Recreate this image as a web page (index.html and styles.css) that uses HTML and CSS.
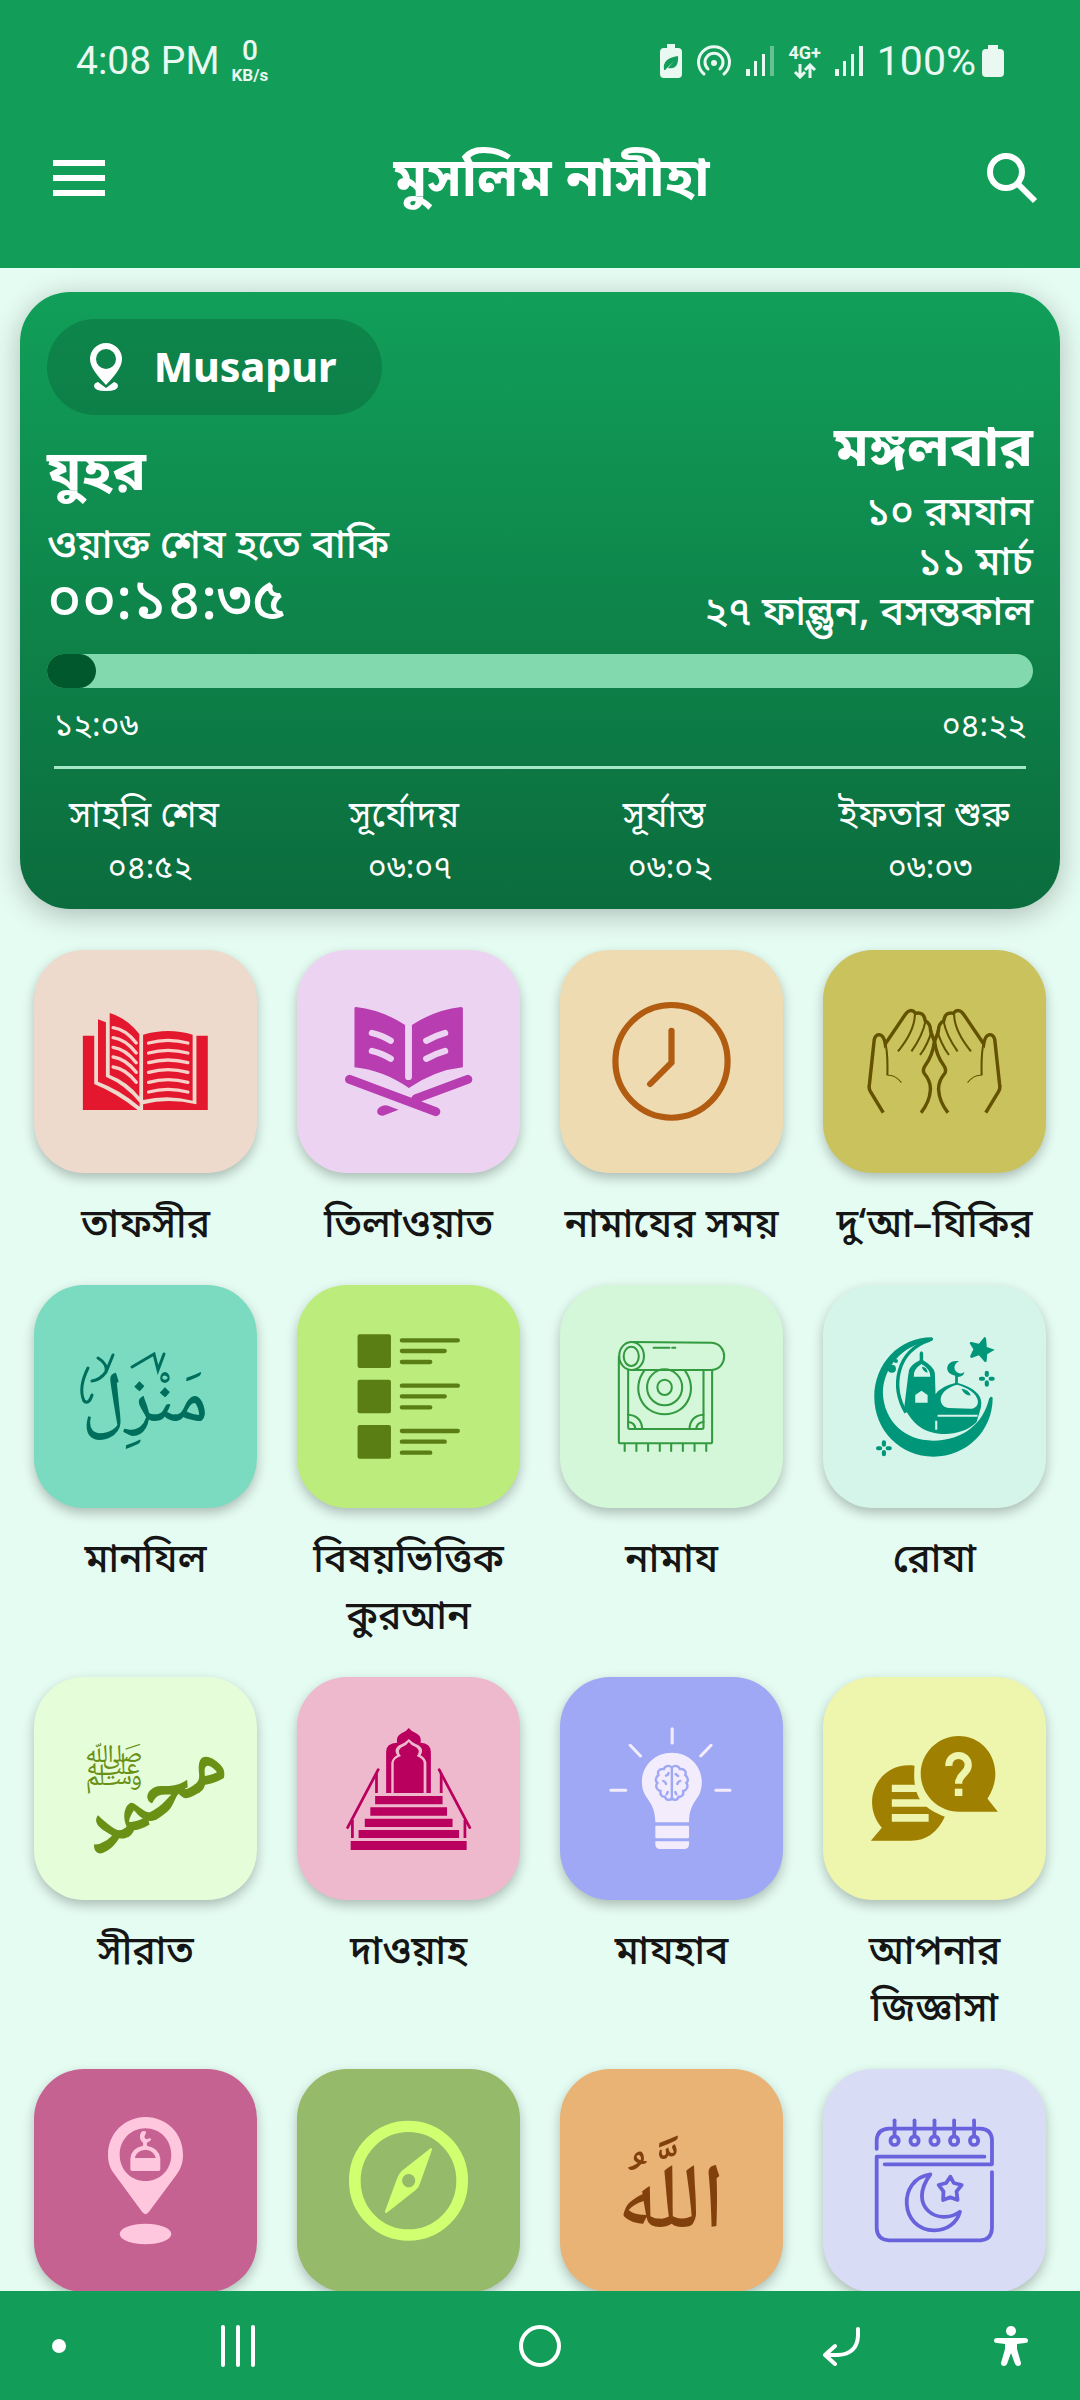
FILE: index.html
```html
<!DOCTYPE html>
<html lang="bn">
<head>
    <meta charset="UTF-8">
    <meta name="viewport" content="width=device-width, initial-scale=1">
    <title>মুসলিম নাসীহা</title>
    <link rel="stylesheet" href="styles.css">
</head>
<body>
<div class="app">
    <header class="header">
        <div class="status">
            <div class="status_left">
                <span>4:08 PM</span>
                <span class="speed"><b>0</b><small>KB/s</small></span>
            </div>
            <div class="status_right">
                <svg width="22" height="34" viewBox="0 0 22 34"><path fill="#e9f8f0" d="M7 0h8v4h3q4 0 4 4v22q0 4-4 4H4q-4 0-4-4V8q0-4 4-4h3z"/><path fill="#129d59" d="M4 26Q2 14 18 12q1 14-10 12l6-7-9 9z"/></svg>
                <svg width="36" height="32" viewBox="0 0 36 32" fill="none" stroke="#e9f8f0" stroke-width="3" stroke-linecap="round"><path d="M8 29a15.500 15.500 0 1 1 20 0M12 24a9 9 0 1 1 12 0"/><circle cx="18" cy="18" r="3" fill="#e9f8f0" stroke="none"/></svg>
                <svg width="28" height="30" viewBox="0 0 28 30" fill="#e9f8f0"><path d="M0 23h4v7H0zM8 15h3v15H8zM16 8h3v22h-3z"/><path opacity=".4" d="M24 0h4v30h-4z"/></svg>
                <span class="network"><b>4G+</b><svg width="26" height="16" viewBox="0 0 26 16" fill="none" stroke="#e9f8f0" stroke-width="3"><path d="M8 1v12M3 9l5 5 5-5M18 15V3M13 7l5-5 5 5"/></svg></span>
                <svg width="28" height="30" viewBox="0 0 28 30" fill="#e9f8f0"><path d="M0 23h4v7H0zM8 15h3v15H8zM16 8h3v22h-3zM24 0h4v30h-4z"/></svg>
                <span class="battery">100%<svg width="22" height="32" viewBox="0 0 22 32"><path fill="#e9f8f0" d="M6 0h10v4h2q4 0 4 4v20q0 4-4 4H4q-4 0-4-4V8q0-4 4-4h2z"/></svg></span>
            </div>
        </div>
        <div class="toolbar">
            <button class="tool" type="button" aria-label="মেনু"><svg width="52" height="36" viewBox="0 0 52 36" fill="#fff"><path d="M0 0h52v6H0zM0 15h52v6H0zM0 30h52v6H0z"/></svg></button>
            <h1>মুসলিম নাসীহা</h1>
            <button class="tool" type="button" aria-label="খুঁজুন"><svg width="52" height="52" viewBox="0 0 52 52" fill="none" stroke="#fff" stroke-width="6"><circle cx="20" cy="20" r="16"/><path d="M31 31l18 18"/></svg></button>
        </div>
    </header>

    <main class="content">
        <section class="card">
            <div class="summary">
                <div class="now">
                    <button class="place" type="button">
                        <svg width="32" height="48" viewBox="0 0 32 48"><path fill="#fff" fill-rule="evenodd" d="M16 0a16 16 0 0 1 16 16c0 9-8 17-16 26C8 33 0 25 0 16A16 16 0 0 1 16 0zm0 6a10 10 0 1 0 0 20 10 10 0 0 0 0-20z"/><path fill="#fff" d="M8 39l8 6 8-6q4 1 4 4 0 5-12 5T4 43q0-3 4-4z"/></svg>
                        <span>Musapur</span>
                    </button>
                    <h2>যুহর</h2>
                    <p>ওয়াক্ত শেষ হতে বাকি</p>
                    <p class="countdown">০০:১৪:৩৫</p>
                </div>
                <div class="date">
                    <h2>মঙ্গলবার</h2>
                    <p>১০ রমযান</p>
                    <p>১১ মার্চ</p>
                    <p>২৭ ফাল্গুন, বসন্তকাল</p>
                </div>
            </div>
            <div class="bar"><div class="bar_fill" style="width: 5%"></div></div>
            <div class="range"><span>১২:০৬</span><span>০৪:২২</span></div>
            <dl class="times">
                <div><dt>সাহরি শেষ</dt><dd>০৪:৫২</dd></div>
                <div><dt>সূর্যোদয়</dt><dd>০৬:০৭</dd></div>
                <div><dt>সূর্যাস্ত</dt><dd>০৬:০২</dd></div>
                <div><dt>ইফতার শুরু</dt><dd>০৬:০৩</dd></div>
            </dl>
        </section>

        <nav class="grid">
            <a class="item" href="#">
                <span class="tile tafsir">
                    <svg viewBox="99 60 648 669" preserveAspectRatio="none">
                        <g fill="#e3182f">
                            <path d="M241 317h33v145q66 28 126 78H241z"/>
                            <path d="M285 268l23 9v163q57 25 98 78v12q-56-50-121-75z"/>
                            <path d="M319 249q51 16 86 63v188q-35-45-86-65z"/>
                            <path d="M416 314q74-22 144 0v198q-70-20-144-2z"/>
                            <path d="M571 317h33v223H416v-17q74-20 155 0z"/>
                        </g>
                        <g fill="none" stroke="#f9cfc8" stroke-width="10" stroke-linecap="round">
                            <path d="M329 293q36 5 67 46M329 323q36 5 67 46M329 352q36 5 67 46M329 381q36 5 67 46M329 411q36 5 67 46"/>
                            <path d="M432 339q56-16 114 0M432 369q56-16 114 0M432 398q56-16 114 0M432 427q56-16 114 0M432 457q56-16 114 0M432 486q56-16 114 0"/>
                        </g>
                    </svg>
                </span>
                তাফসীর
            </a>
            <a class="item" href="#">
                <span class="tile tilawat">
                    <svg viewBox="862 60 648 669" preserveAspectRatio="none">
                        <path fill="#b73db1" d="M1033 231q77 9 143 54v155a10 10 0 0 0 20 0V285q66-45 143-54 5 0 5 5v176q-79 8-157 62-77-54-158-62V235q0-4 4-4z"/>
                        <path fill="none" stroke="#edd3f2" stroke-width="19" stroke-linecap="round" d="M1080 309q30 7 54 23M1080 363q30 7 54 23M1292 309q-28 8-54 23M1292 363q-28 8-54 23"/>
                        <path fill="none" stroke="#b73db1" stroke-width="27" stroke-linecap="round" d="M1015 448l250 97M1358 448l-150 58"/>
                        <path fill="#b73db1" d="M1102 532q16-12 32-2l23 9-45 18q-17 1-17-13 0-8 7-12z"/>
                    </svg>
                </span>
                তিলাওয়াত
            </a>
            <a class="item" href="#">
                <span class="tile times_tile">
                    <svg viewBox="58 60 648 669" preserveAspectRatio="none" fill="none" stroke="#b15c10" stroke-width="18" stroke-linecap="round" stroke-linejoin="round">
                        <ellipse cx="382" cy="394" rx="163" ry="169"/>
                        <path d="M382 302v96l-62 64"/>
                    </svg>
                </span>
                নামাযের সময়
            </a>
            <a class="item" href="#">
                <span class="tile dua">
                    <svg viewBox="822 60 648 669" preserveAspectRatio="none" fill="none" stroke="#635200">
                        <g id="hand">
                            <path stroke-width="10" d="M997 548l-37-63q-6-10-3-23l14-134q4-14 15-14 13 2 17 28l57-87q16-24 31-5 24-6 28 22 16 8 16 33l11 29q-6 44-26 71-10 13-4 25 20 25 18 50-2 35-27 68"/>
                            <path stroke-width="6" d="M1002 335q9 30 7 101M1089 252q0 50-49 112M1120 272q-8 45-41 92M1138 300q-9 40-34 75"/>
                            <path stroke-width="3" d="M1009 436q22-3 41 22"/>
                        </g>
                        <use href="#hand" transform="translate(2292 0) scale(-1 1)"/>
                    </svg>
                </span>
                দু‘আ–যিকির
            </a>
            <a class="item" href="#">
                <span class="tile manzil">
                    <svg viewBox="0 0 223 223" fill="#006e5c">
                        <text class="arabic" x="111" y="136" font-size="72" text-anchor="middle">مَنْزِل</text>
                        <!-- ornaments around the word -->
                        <g fill="none" stroke="#006e5c" stroke-width="3" stroke-linecap="round">
                            <path d="M64 73q10 6 8 14l7-17M72 87q-6 8-14 9M54 83q-10 20-4 33 5 4 8-6M98 82l22-13 4 16 6-16"/>
                        </g>
                    </svg>
                </span>
                মানযিল
            </a>
            <a class="item" href="#">
                <span class="tile topics">
                    <svg viewBox="862 75 648 669" preserveAspectRatio="none">
                        <g id="topic">
                            <rect x="1038" y="223" width="97" height="101" rx="6" fill="#5a7d14"/>
                            <path stroke="#5a7d14" stroke-width="13" stroke-linecap="round" d="M1167 241h162M1167 273h124M1167 306h82"/>
                        </g>
                        <use href="#topic" y="136"/>
                        <use href="#topic" y="272"/>
                    </svg>
                </span>
                বিষয়ভিত্তিক কুরআন
            </a>
            <a class="item" href="#">
                <span class="tile namaz">
                    <svg viewBox="58 75 648 669" preserveAspectRatio="none" fill="none" stroke="#349a40" stroke-width="6" stroke-linecap="round">
                        <ellipse cx="266" cy="288" rx="36" ry="42"/>
                        <ellipse cx="265" cy="289" rx="22" ry="29"/>
                        <path d="M266 246l233 2c48 4 48 78 0 82H266M330 263h46M384 263h9"/>
                        <path d="M229 290v256q0 4 5 4h261q5 0 5-5V330M256 330v172q0 5 5 5h209q5 0 5-5V330"/>
                        <ellipse cx="362" cy="382" rx="21" ry="23"/>
                        <ellipse cx="362" cy="382" rx="51" ry="54"/>
                        <path d="M303 332c-40 54-8 131 59 131s99-77 59-131"/>
                        <path d="M256 464q38 2 41 43M256 486q20 2 21 21M475 464q-38 2-41 43M475 486q-20 2-21 21"/>
                        <path d="M246 552v21M280 552v21M314 552v21M348 552v21M381 552v21M415 552v21M449 552v21M483 552v21"/>
                    </svg>
                </span>
                নামায
            </a>
            <a class="item" href="#">
                <span class="tile roza">
                    <svg viewBox="822 75 648 669" preserveAspectRatio="none" fill="#00967a">
                        <path d="M1138 232q8 5 0 11c-90 10-142 85-142 157 4 85 64 142 146 142 88 0 146-52 163-127 5-8 10-5 10 0 0 97-75 175-172 175s-172-80-172-179 72-179 167-179z"/>
                        <path fill="none" stroke="#00967a" stroke-width="10" d="M1133 240c-100 34-114 140-70 218"/>
                        <path d="M1069 350l3-20q5-15 31-29v-22q5-10 10 0v22q30 18 34 38l2 64q15-24 57-34v-22c-40-10-22-52 11-43-20 10-15 32 1 36q6 2 15-4-2 14-19 15v18q67 20 68 60 0 14-4 24l-10 34c-45 46-130 45-172 8q-20-18-38-52z"/>
                        <path fill="#d6f5ea" d="M1086 350q-3-21 22-38 26 15 26 38zM1090 428v-23l18-13 18 13v23zM1187 444c-34-6-34-54 25-70 65 18 75 65 42 72z"/>
                        <path d="M1109 320q16 0 17 18-14-4-17-18zM1224 386q22 2 27 20-16 2-27-20z"/>
                        <path fill="none" stroke="#d6f5ea" stroke-width="6" d="M1155 467h116M1151 482v27"/>
                        <circle cx="1022" cy="326" r="12"/><circle cx="1034" cy="303" r="6"/>
                        <path d="M1291 231q5 0 5 5l2 25 23 8-22 14q-1 20-2 22l-5 1-17-20-21 8q-6-2-4-7l9-19-11-18q1-5 6-4l21 5z"/>
                        <path fill="none" stroke="#00967a" stroke-width="12" stroke-linecap="round" d="M1298 338v7M1298 367v7M1281 356h6M1309 356h6M999 547v7M999 576v7M982 565h6M1010 565h6"/>
                    </svg>
                </span>
                রোযা
            </a>
            <a class="item" href="#">
                <span class="tile seerat">
                    <svg viewBox="0 0 223 223" fill="#6a9016">
                        <text class="arabic" x="118" y="142" font-size="78" font-weight="700" text-anchor="middle" transform="rotate(-32 118 120)">محمد</text>
                        <text class="arabic" x="80" y="108" font-size="48" text-anchor="middle">ﷺ</text>
                    </svg>
                </span>
                সীরাত
            </a>
            <a class="item" href="#">
                <span class="tile dawah">
                    <svg viewBox="862 51 648 669" preserveAspectRatio="none" fill="#b9005f">
                        <path d="M1121 399V275q0-26 32-27-4-20 14-29 14-6 20-15 6 9 20 15 18 9 14 29 29 1 30 27v124h-13V310q0-12-14-23l-3-1q14-23-14-34-13-7-20-15-7 8-20 15-28 11-14 34l-3 1q-14 11-14 23v89z"/>
                        <path d="M1143 399v-91q0-12 21-20-14-17 5-28 12-4 18-14 6 10 18 14 19 11 5 28 19 8 20 20v91z"/>
                        <path d="M1089 408h196v25h-196zM1075 442h223v25h-223zM1059 476h255v25h-255zM1041 510h292v24h-292zM1018 543h337v27h-337z"/>
                        <path fill="none" stroke="#b9005f" stroke-width="8" stroke-linecap="round" d="M1009 503l89-174M1364 503l-89-174"/>
                        <path d="M1089 340h8v59h-8zM1019 480h8v54h-8zM1277 340h8v59h-8zM1346 480h8v54h-8z"/>
                    </svg>
                </span>
                দাওয়াহ
            </a>
            <a class="item" href="#">
                <span class="tile mazhab">
                    <svg viewBox="58 51 648 669" preserveAspectRatio="none">
                        <path fill="#f3ecfd" d="M383 278c50 0 87 39 87 88 0 58-36 50-37 121h-98c-1-71-39-67-39-121 0-49 37-88 87-88zM335 500q0-3 3-3h92q3 0 3 3v31q0 4-4 4h-90q-4 0-4-4zM335 544h98v10q-2 13-14 13h-70q-12 0-14-13z"/>
                        <path fill="none" stroke="#f3ecfd" stroke-width="9" stroke-linecap="round" d="M384 206v43M262 256l30 32M497 256l-30 32M206 391h43M511 391h41"/>
                        <g fill="none" stroke="#9fa8f4" stroke-width="7" stroke-linecap="round">
                            <path d="M383 322c-9-8-21-4-23 5-15-1-20 8-16 18-10 8-9 19-3 24-8 10 0 23 9 24-2 12 5 18 13 17 3 11 13 12 20 5M383 322c9-8 21-4 23 5 15-1 20 8 16 18 10 8 9 19 3 24 8 10 0 23-9 24 2 12-5 18-13 17-3 11-13 12-20 5M383 322v96"/>
                            <path d="M373 339q0 6-7 8M394 342l7 6M358 363q7 2 8 9M407 363q-7 2-8 9M371 396l-3 7M393 396l3 7"/>
                        </g>
                    </svg>
                </span>
                মাযহাব
            </a>
            <a class="item" href="#">
                <span class="tile question">
                    <svg viewBox="822 51 648 669" preserveAspectRatio="none" fill="#9f8000">
                        <path d="M1088 317c-7 90 18 125 88 153q-32 71-98 72H961l32-39c-66-78-10-200 95-186z"/>
                        <path fill="#eef5ac" d="M1022 374h66l10 22h-76zM1022 418h88l21 22h-109zM1022 462h107v23h-107z"/>
                        <path d="M1216 228c88 0 139 102 84 188l30 39h-114c-60 0-110-52-110-114s50-113 110-113z"/>
                        <path fill="none" stroke="#eef5ac" stroke-width="21" d="M1188 318c-2-42 56-42 56-2 0 26-28 24-28 55"/>
                        <path fill="#eef5ac" d="M1205 386h22v22h-22z"/>
                    </svg>
                </span>
                আপনার জিজ্ঞাসা
            </a>
            <a class="item" href="#" aria-label="মসজিদ">
                <span class="tile mosque">
                    <svg viewBox="99 57 648 669" preserveAspectRatio="none" fill="#ffc7de">
                        <path fill-rule="evenodd" d="M423 201c61 0 109 49 109 113 0 25-7 43-19 60l-81 113q-9 11-18 0l-80-113c-13-17-20-35-20-60 0-64 49-113 109-113zm0 34c-42 0-75 34-75 79s33 79 75 79 75-34 75-79-33-79-75-79z"/>
                        <path fill-rule="evenodd" d="M379 358v-32q2-32 37-39v-9c-15-11-10-37 4-35 10 2 0 12 0 18 2 8 9 8 13 4 8 0 10 6-6 13v9q36 7 39 39v32q0 5-5 5h-77q-5 0-5-5zM392 324h61q-7-24-30-25-25 1-31 25z"/>
                        <ellipse cx="423" cy="552" rx="75" ry="31"/>
                    </svg>
                </span>
            </a>
            <a class="item" href="#" aria-label="কিবলা">
                <span class="tile qibla">
                    <svg viewBox="862 57 648 669" preserveAspectRatio="none" fill="#d0ff70">
                        <ellipse cx="1186" cy="392" rx="156" ry="163" fill="none" stroke="#d0ff70" stroke-width="34"/>
                        <path fill-rule="evenodd" d="M1251 294q5 0 3 6l-33 96q-4 15-14 24l-84 68q-7 4-5-5l35-98q5-14 14-23zM1186 372a19 20 0 1 0 1 0z"/>
                    </svg>
                </span>
            </a>
            <a class="item" href="#" aria-label="আল্লাহর নাম">
                <span class="tile names">
                    <svg viewBox="0 0 223 223" fill="#81400c">
                        <text class="arabic" x="111" y="158" font-size="92" text-anchor="middle">اللَّهُ</text>
                    </svg>
                </span>
            </a>
            <a class="item" href="#" aria-label="ক্যালেন্ডার">
                <span class="tile calendar">
                    <svg viewBox="822 57 648 669" preserveAspectRatio="none" fill="none" stroke="#6962dd" stroke-width="11" stroke-linecap="round" stroke-linejoin="round">
                        <path d="M978 297v-28q3-32 36-33h265q32 1 34 33v74h-312M1291 320H978v215q2 34 36 36h265q32-2 34-36V366"/>
                        <g id="ring"><path d="M1030 211v44"/><ellipse cx="1030" cy="272" rx="12" ry="13"/></g>
                        <use href="#ring" x="58"/>
                        <use href="#ring" x="116"/>
                        <use href="#ring" x="173"/>
                        <use href="#ring" x="231"/>
                        <path d="M1134 373c-97 14-90 168 12 168 36 0 65-22 74-56-60 46-156-14-86-112z"/>
                        <path d="M1192 380l10 19 23 6-15 19 3 26-21-8-21 8 1-26-14-19 22-6z"/>
                    </svg>
                </span>
            </a>
        </nav>
    </main>

    <footer class="navbar">
        <span class="dot"></span>
        <button type="button" aria-label="Recents"><svg width="36" height="44" viewBox="0 0 36 44" stroke="#fff" stroke-width="4" stroke-linecap="round"><path d="M3 3v38M18 3v38M33 3v38"/></svg></button>
        <button type="button" aria-label="Home"><svg width="44" height="44" viewBox="0 0 44 44" fill="none" stroke="#fff" stroke-width="4"><circle cx="22" cy="22" r="19"/></svg></button>
        <button type="button" aria-label="Back"><svg width="40" height="40" viewBox="0 0 40 40" fill="none" stroke="#fff" stroke-width="4" stroke-linecap="round" stroke-linejoin="round"><path d="M36 3v7q-1 18-20 19H4M13 20l-10 9 10 9"/></svg></button>
        <button type="button" aria-label="Accessibility"><svg width="34" height="40" viewBox="0 0 34 40" fill="#fff"><circle cx="17" cy="5" r="5"/><path d="M3 12h28q3 0 3 2.500T31 17l-8 1v5l4 14q0 3-3 3-2 0-3-2l-4-11-4 11q-1 2-3 2-3 0-3-3l4-14v-5l-8-1q-3 0-3-2.500T3 12z"/></svg></button>
    </footer>
</div>
</body>
</html>
```
FILE: styles.css
```css
* {
    box-sizing: border-box;
}
body {
    margin: 0;
    background-color: #e5fcf2;
    color: #151515;
    font-family: "Noto Sans Bengali", "Noto Sans", sans-serif;
}
h1, h2, p, dl, dd {
    margin: 0;
}
button {
    padding: 0;
    border: 0;
    background: none;
    color: inherit;
    font-family: inherit;
}
svg {
    display: block;
}
.app {
    display: flex;
    flex-direction: column;
    height: 100vh;
}
.header {
    height: 268px;
    flex: none;
    background-color: #129d59;
    color: #fff;
}
.status {
    display: flex;
    justify-content: space-between;
    padding: 38px 76px 0;
    height: 120px;
    color: #e9f8f0;
    font: 39px/46px Roboto, sans-serif;
}
.status_left, .status_right, .battery {
    display: flex;
    align-items: center;
    height: 46px;
}
.status_left {
    gap: 12px;
}
.status_right {
    gap: 14px;
}
.battery {
    gap: 6px;
    font-size: 41px;
}
.speed, .network {
    display: flex;
    flex-direction: column;
    align-items: center;
}
.speed b {
    font-size: 28px;
    line-height: 28px;
    font-weight: 500;
}
.speed small {
    font-size: 17px;
    line-height: 20px;
    font-weight: 700;
}
.network b {
    font-size: 18px;
    line-height: 20px;
}
.toolbar {
    display: flex;
    align-items: center;
    justify-content: space-between;
    padding: 2px 42px 0 53px;
    height: 114px;
}
.toolbar h1 {
    padding: 8px 0 0 12px;
    font-size: 54px;
    line-height: 80px;
}
.content {
    flex: 1;
    min-height: 0;
    overflow: hidden;
}
.card {
    margin: 24px 20px 0;
    padding: 27px 0 0;
    height: 617px;
    border-radius: 50px;
    background-image: linear-gradient(#119f59, #0b6c3d);
    box-shadow: 0 6px 28px rgba(0, 0, 0, 0.25);
    color: #fff;
}
.summary {
    display: flex;
    justify-content: space-between;
    padding: 0 27px;
    height: 335px;
}
.place {
    display: flex;
    align-items: center;
    gap: 32px;
    height: 96px;
    padding: 0 45px 0 43px;
    border-radius: 48px;
    background-color: rgba(8, 80, 45, 0.3);
    font-size: 41px;
    font-weight: 700;
}
.place span {
    padding-top: 8px;
}
.summary h2 {
    font-size: 56px;
    line-height: 60px;
}
.summary p {
    font-size: 40px;
    line-height: 50px;
    font-weight: 500;
}
.now h2 {
    margin: 31px 0 17px;
}
.summary .countdown {
    font-size: 58px;
    line-height: 64px;
}
.date {
    padding-top: 103px;
    text-align: right;
}
.date h2 {
    margin-bottom: 8px;
}
.bar {
    height: 34px;
    margin: 0 27px;
    border-radius: 17px;
    background-color: #82d9ae;
}
.bar_fill {
    height: 34px;
    border-radius: 17px;
    background-color: #00582c;
}
.range {
    display: flex;
    justify-content: space-between;
    margin: 0 34px;
    height: 81px;
    padding-top: 15px;
    border-bottom: 3px solid #a6e7c8;
    font-size: 32px;
    line-height: 50px;
}
.times {
    display: grid;
    grid-template-columns: repeat(4, 1fr);
    padding-top: 23px;
    text-align: center;
    font-size: 32px;
    line-height: 52px;
}
.times dt {
    padding-right: 12px;
    font-size: 36px;
}
.grid {
    display: grid;
    grid-template-columns: repeat(4, 1fr);
    column-gap: 40px;
    row-gap: 29px;
    padding: 41px 34px;
}
.item {
    color: #151515;
    font-size: 39px;
    line-height: 57px;
    font-weight: 500;
    text-align: center;
    text-decoration: none;
}
.tile {
    display: block;
    aspect-ratio: 1;
    margin-bottom: 26px;
    border-radius: 50px;
    box-shadow: 0 5px 12px rgba(0, 0, 0, 0.25);
}
.tile svg {
    width: 100%;
    height: 100%;
}
.arabic {
    font-family: "Noto Naskh Arabic", "Noto Sans Arabic", "DejaVu Sans", sans-serif;
}
.tafsir { background-color: #eddacc; }
.tilawat { background-color: #edd3f2; }
.times_tile { background-color: #eedbb2; }
.dua { background-color: #c9c25d; }
.manzil { background-color: #7adbc0; }
.topics { background-color: #bbec7c; }
.namaz { background-color: #d3f7d8; }
.roza { background-color: #d6f5ea; }
.seerat { background-color: #e5fdd9; }
.dawah { background-color: #eeb9cd; }
.mazhab { background-color: #9fa8f4; }
.question { background-color: #eef5ac; }
.mosque { background-color: #c56292; }
.qibla { background-color: #95ba6a; }
.names { background-color: #e8b375; }
.calendar { background-color: #d8dcf5; }
.navbar {
    position: relative;
    display: grid;
    grid-template-columns: 35px 1fr 1fr 1fr 35px;
    flex: none;
    align-items: center;
    height: 109px;
    padding: 0 52px;
    background-color: #129d59;
}
.navbar button {
    display: flex;
    justify-content: center;
}
.dot {
    width: 14px;
    height: 14px;
    border-radius: 50%;
    background-color: #fff;
}
```
